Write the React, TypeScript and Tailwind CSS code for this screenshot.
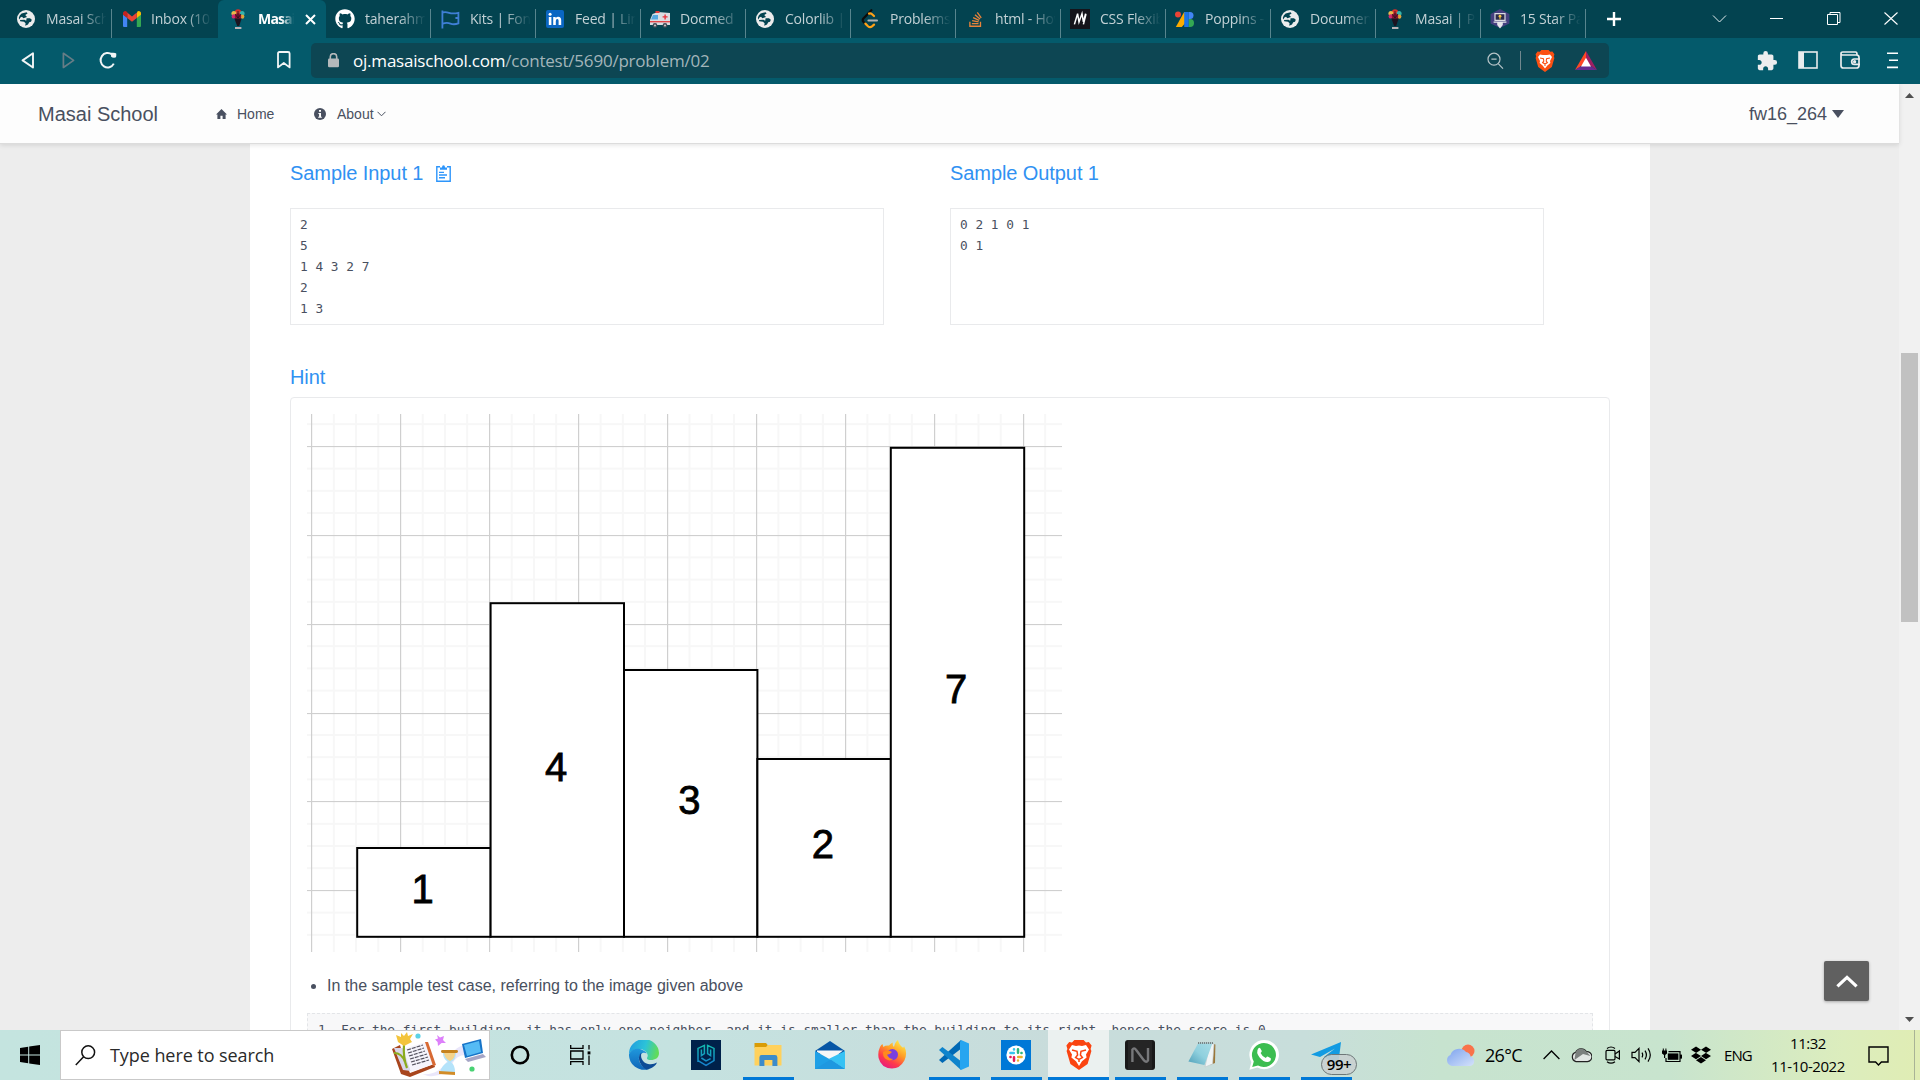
import React from "react";
import { FaGithub, FaStackOverflow, FaDropbox } from "react-icons/fa";
import { MdExtension } from "react-icons/md";

const ui = "font-['Open_Sans','Noto_Sans',sans-serif]";

/* ---------- Favicons ---------- */

const Globe = () => (
  <svg width="18" height="18" viewBox="0 0 18 18">
    <circle cx="9" cy="9" r="9" fill="#ececec" />
    <path d="M4.6 3.4 L9.6 2.2 L10.6 3.6 L8.2 5 L10 7 L6.4 8.2 L5 6.8 L3.4 7.6 L2.4 9.6 L1.8 8 Q2.2 5 4.6 3.4Z M9.6 8.2 H13 L14.8 9.8 L14 11.8 L12.2 12.2 L11 14.4 L8.2 15.8 L8.6 13.2 L7 11.8 L3.2 11.2 L3 10 L7.4 9.8 L9.2 10.8Z" fill="#034350" />
  </svg>
);
const Gmail = () => (
  <svg width="18" height="16" viewBox="0 0 18 16">
    <path d="M0 3.4 V15 Q0 16 1 16 H4.2 V6.6Z" fill="#4285f4" />
    <path d="M18 3.4 V15 Q18 16 17 16 H13.8 V6.6Z" fill="#34a853" />
    <path d="M13.8 2.4 V7 L18 3.8 V2.4 C18 .4 15.8 -.6 14.4 .6Z" fill="#fbbc04" />
    <path d="M4.2 7 V1.6 L9 5.4 L13.8 1.6 V7 L9 10.8Z" fill="#ea4335" />
    <path d="M0 2.4 V3.8 L4.2 7 V1.5 L3.6 .6 C2.2 -.6 0 .4 0 2.4Z" fill="#c5221f" />
  </svg>
);
const Balloons = () => (
  <svg width="16" height="20" viewBox="0 0 16 20">
    <circle cx="8" cy="3.4" r="3.2" fill="#d8322c" />
    <circle cx="3.9" cy="4.4" r="2.5" fill="#e9b84a" />
    <circle cx="12.1" cy="4.4" r="2.5" fill="#35b3ad" />
    <circle cx="3.8" cy="7.4" r="2.2" fill="#d22a72" />
    <circle cx="12.2" cy="7.6" r="2.2" fill="#e0a23a" />
    <circle cx="8" cy="7.4" r="3.2" fill="#8f1330" />
    <path d="M4.4 9.4 L11.6 9.4 L9.2 17 H7.2Z" fill="#1d1420" />
    <path d="M8 2 V9 M5 5 L8 9 L11 5" stroke="#221322" strokeWidth=".8" fill="none" />
    <rect x="5" y="18" width="6.4" height="2" fill="#b9b3b6" />
  </svg>
);
const Flag = () => (
  <svg width="19" height="19" viewBox="0 0 19 19" fill="none" stroke="#3f7fd6" strokeWidth="2">
    <path d="M1.4 0.5 V18.5 M1.4 2.6 Q4 1.6 8 2.8 T17.4 2.8 V13.4 Q13 15 9.4 13.6 T1.4 13.8 M17.4 8 L14.4 8" strokeWidth="1.8" />
  </svg>
);
const LinkedIn = () => (
  <svg width="18" height="18" viewBox="0 0 18 18">
    <rect width="18" height="18" rx="2" fill="#0a66c2" />
    <path d="M2.8 7 H5.4 V15 H2.8Z M7.2 7 H9.7 V8.2 Q10.5 6.8 12.2 6.8 Q15.2 6.8 15.2 10.3 V15 H12.6 V10.8 Q12.6 9 11.3 9 Q9.8 9 9.8 10.9 V15 H7.2Z" fill="#fff" />
    <circle cx="4.1" cy="4.3" r="1.5" fill="#fff" />
  </svg>
);
const Ambulance = () => (
  <svg width="20" height="17" viewBox="0 0 20 17">
    <path d="M2.5 3 L8 1 L20 2 V14 H0 V9Z" fill="#d9dde2" />
    <rect x="5.5" y="0" width="4" height="2" fill="#e23b3b" />
    <path d="M3 4 H8 V8.4 H1Z" fill="#55a9e0" />
    <path d="M0 10 H20 V11.4 H0Z" fill="#e2464a" />
    <path d="M14.4 3.4 H15.8 V5.2 H17.6 V6.6 H15.8 V8.4 H14.4 V6.6 H12.6 V5.2 H14.4Z" fill="#e8323c" />
    <circle cx="5" cy="14.4" r="2.4" fill="#414b57" /><circle cx="15" cy="14.4" r="2.4" fill="#414b57" />
    <circle cx="5" cy="14.4" r="1" fill="#ccc" /><circle cx="15" cy="14.4" r="1" fill="#ccc" />
  </svg>
);
const Leet = () => (
  <svg width="18" height="20" viewBox="0 0 18 20" fill="none" strokeLinecap="round">
    <path d="M10.4 1.2 L2.4 9.4 Q1 11.2 2.4 12.8 L4 14.4" stroke="#0c0c0c" strokeWidth="2.2" />
    <path d="M8 4.6 Q9.6 4 10.8 5 L13 7" stroke="#ffa116" strokeWidth="2.2" />
    <path d="M4.4 14.6 L7 17.2 Q9 19 11 17.4 L13 15.6" stroke="#ffa116" strokeWidth="2.2" />
    <path d="M7.4 11.4 H16" stroke="#b3b3b3" strokeWidth="2" />
  </svg>
);
const MSquare = () => (
  <svg width="20" height="20" viewBox="0 0 20 20">
    <rect width="20" height="20" fill="#15141a" />
    <path d="M4.4 15.4 L7.6 4.6 L9 13 L12 4.6 L13.4 13 L15.6 4.6 M13.4 15.4 L16 5" stroke="#fff" strokeWidth="1.5" fill="none" />
  </svg>
);
const Fonts = () => (
  <svg width="20" height="16" viewBox="0 0 20 16">
    <path d="M6.8 16 H.8 L9.2 1 H13V9Z" fill="#fbab00" />
    <rect x="9.2" y="1" width="4.6" height="15" fill="#1a73e8" />
    <circle cx="3" cy="3.6" r="3" fill="#ea4335" />
    <path d="M13.8 1 H15 A3.5 3.5 0 0 1 15 8 H13.8Z" fill="#4285f4" />
    <path d="M13.8 8 H15 A4 4 0 0 1 15 16 H13.8Z" fill="#34a853" />
  </svg>
);
const StarLaptop = () => (
  <svg width="20" height="20" viewBox="0 0 20 20">
    <path d="M10 0 L19.4 5 V14.4 L10 19 L.6 14.4 V5Z" fill="#454080" />
    <path d="M5 4.6 H15 V11.4 H5Z" fill="#2b2b4c" stroke="#dcdce4" strokeWidth="1.2" />
    <path d="M3.6 12.4 H16.4 V13.8 H12.8 V16 L10 19.4 L7.2 16 V13.8 H3.6Z" fill="#e6e6ea" />
    <circle cx="10" cy="7.2" r="1.4" fill="#f5c542" /><rect x="9.5" y="7.8" width="1" height="2.6" fill="#f5c542" />
  </svg>
);

type TabData = { label: string; icon: React.ReactNode };
const tabs: TabData[] = [
  { label: "taherahmed", icon: <FaGithub size={20} color="#fff" /> },
  { label: "Kits | Font A", icon: <Flag /> },
  { label: "Feed | Linked", icon: <LinkedIn /> },
  { label: "Docmed", icon: <Ambulance /> },
  { label: "Colorlib | W", icon: <Globe /> },
  { label: "Problems - L", icon: <Leet /> },
  { label: "html - How", icon: <FaStackOverflow size={17} color="#e8833a" /> },
  { label: "CSS Flexible", icon: <MSquare /> },
  { label: "Poppins - G", icon: <Fonts /> },
  { label: "Document", icon: <Globe /> },
  { label: "Masai | Pro", icon: <Balloons /> },
  { label: "15 Star Pat", icon: <StarLaptop /> },
];

const TabLabel = ({ children }: { children: React.ReactNode }) => (
  <span className="flex-1 overflow-hidden whitespace-nowrap text-[14px] leading-5 tracking-[-0.2px] text-[#c3d1d5] [mask-image:linear-gradient(to_right,black_55%,transparent_98%)]">
    {children}
  </span>
);

const Tab = ({ label, icon }: TabData) => (
  <div className="mt-[9px] flex h-[29px] w-[105px] shrink-0 border-r border-[#58858e] pr-[3px]">
    <div className="flex h-5 min-w-0 flex-1 items-center">
      <span className="flex w-[39px] shrink-0 justify-center pr-[1px]">{icon}</span>
      <TabLabel>{label}</TabLabel>
    </div>
  </div>
);

const TabStrip = () => (
  <div className={`flex h-[38px] bg-[#034350] ${ui}`}>
    <div className="ml-[7px] flex">
      <Tab label="Masai School" icon={<Globe />} />
      <div className="mt-[9px] flex h-[29px] w-[106px] pr-[5px]">
        <div className="flex h-5 min-w-0 flex-1 items-center">
          <span className="flex w-[39px] shrink-0 justify-center"><Gmail /></span>
          <TabLabel>Inbox (102)</TabLabel>
        </div>
      </div>
      <div className="flex h-[38px] w-[108px] items-center rounded-t-[6px] bg-[#045a6b]">
        <span className="flex w-[40px] shrink-0 justify-center"><Balloons /></span>
        <span className="w-[36px] overflow-hidden whitespace-nowrap text-[14px] font-bold leading-5 tracking-[-0.8px] text-white [mask-image:linear-gradient(to_right,black_65%,transparent)]">Masai |</span>
        <svg className="ml-[11px]" width="11" height="11" viewBox="0 0 11 11" stroke="#fff" strokeWidth="2"><path d="M1 1 L10 10 M10 1 L1 10" /></svg>
      </div>
      {tabs.map((t) => <Tab key={t.label} {...t} />)}
    </div>
    <svg className="ml-[20px] mt-[11px]" width="16" height="16" viewBox="0 0 16 16" stroke="#fff" strokeWidth="2.4"><path d="M8 1 V15 M1 8 H15" /></svg>
    <svg className="ml-[90px] mt-[14px]" width="15" height="10" viewBox="0 0 15 10" fill="none" stroke="#e6eef0" strokeWidth="1"><path d="M1 1.5 L7.5 8 L14 1.5" /></svg>
    <svg className="ml-[43px] mt-[18px]" width="13" height="2" viewBox="0 0 13 2"><rect y="0" width="13" height="1" fill="#fff" /></svg>
    <svg className="ml-[44px] mt-[12px]" width="14" height="13" viewBox="0 0 14 13" fill="none" stroke="#fff"><path d="M.5 2.5 H10.5 V12.5 H.5Z M3 2.5 V.5 H13 V10.5 H10.5" /></svg>
    <svg className="ml-[43px] mt-[12px]" width="14" height="13" viewBox="0 0 14 13" stroke="#fff" strokeWidth="1.1"><path d="M.5 .5 L13.5 12.5 M13.5 .5 L.5 12.5" /></svg>
  </div>
);

const Toolbar = () => (
  <div className={`flex h-[46px] items-start bg-[#045a6b] ${ui}`}>
    <svg className="ml-[21px] mt-[14px]" width="14" height="17" viewBox="0 0 14 17" fill="none" stroke="#f2f5f6" strokeWidth="1.9" strokeLinejoin="round"><path d="M12 1.3 V15.5 L1.6 8.4Z" /></svg>
    <svg className="ml-[27px] mt-[14px]" width="14" height="17" viewBox="0 0 14 17" fill="none" stroke="#667d86" strokeWidth="1.7" strokeLinejoin="round"><path d="M1.4 1.3 V15.5 L11.6 8.4Z" /></svg>
    <svg className="ml-[23px] mt-[13px]" width="19" height="19" viewBox="0 0 19 19" fill="none" stroke="#f2f5f6" strokeWidth="2"><path d="M14.8 12.6 A7 7.2 0 1 1 13 3.6" /><path d="M12 1.8 Q16.5 1.4 17.2 2.4 Q17.6 6 16.4 6.6 Q13.4 7.2 12 5.4Z" fill="#f2f5f6" stroke="none" /></svg>
    <svg className="ml-[159px] mt-[13px]" width="14" height="18" viewBox="0 0 14 18" fill="none" stroke="#f2f5f6" strokeWidth="1.8" strokeLinejoin="round"><path d="M1 2.4 Q1 1 2.4 1 H11 Q12.6 1 12.6 2.4 V16.4 L6.8 12 L1 16.4Z" /></svg>
    <div className="ml-[20px] mt-[5px] flex h-[35px] w-[1298px] items-center rounded-[5px] bg-[#0d4653]">
      <svg className="ml-[17px]" width="11" height="15" viewBox="0 0 11 15"><rect y="5.5" width="11" height="8.7" rx="1.2" fill="#b5b9bb" /><path d="M2.3 6 V3.8 A3.2 3.2 0 0 1 8.7 3.8 V6" fill="none" stroke="#b5b9bb" strokeWidth="1.6" /></svg>
      <span className="ml-[14px] w-[400px] whitespace-nowrap text-[17px] tracking-[-0.21px] text-[#a3b5ba]"><span className="text-white">oj.masaischool.com</span>/contest/5690/problem/02</span>
      <svg className="ml-auto" width="17" height="18" viewBox="0 0 17 18" fill="none" stroke="#b6c4c8" strokeWidth="1.2"><circle cx="7" cy="7.2" r="6" /><path d="M11.2 11.6 L16 16.6 M4.4 7.2 H9.6" /></svg>
      <span className="ml-[16px] h-[19px] w-px bg-[#71888f]" />
      <svg className="ml-[14px]" width="20" height="22" viewBox="0 0 20 22">
        <path d="M4.8 1.8 L6.4 0 H13.6 L15.2 1.8 L17.4 1.6 L19.4 4.2 L18.8 6.4 L19.4 8 L16.8 17 L10 22 L3.2 17 L.6 8 L1.2 6.4 L.6 4.2 L2.6 1.6Z" fill="#fb5012" />
        <path d="M5 4.4 L8 5 H12 L15 4.4 L17 7 L15 11 L15.4 13 L12.4 15.4 L10 18.4 L7.6 15.4 L4.6 13 L5 11 L3 7Z" fill="#fff" />
        <path d="M5 8 L8.4 8.8 L8.8 11 L7.6 12.6 L10 14 L12.4 12.6 L11.2 11 L11.6 8.8 L15 8 M10 14 V16" stroke="#fb5012" strokeWidth="1.1" fill="none" />
      </svg>
      <svg className="ml-[20px] mr-[12px]" width="22" height="19" viewBox="0 0 22 19"><path d="M11 0 L0 19 L11 12Z" fill="#ff4724" /><path d="M11 0 L22 19 L11 12Z" fill="#9e1f63" /><path d="M0 19 H22 L11 12Z" fill="#662d91" /><path d="M11 6.8 L6 15.4 H16Z" fill="#fff" /></svg>
    </div>
    <MdExtension className="ml-[147px] mt-[12px]" size={22} color="#ededee" />
    <svg className="ml-[20px] mt-[13px]" width="20" height="18" viewBox="0 0 20 18"><rect x="1" y="1" width="18" height="16" fill="none" stroke="#e9eced" strokeWidth="1.6" /><rect x="1" y="1" width="5" height="16" fill="#e9eced" /></svg>
    <svg className="ml-[22px] mt-[13px]" width="21" height="18" viewBox="0 0 21 18" fill="none" stroke="#e9eced" strokeWidth="1.7"><path d="M1 2.6 Q1 1 2.8 1 H15.6 Q17 1 17 3.6 M1 2.6 V14.4 Q1 17 3.4 17 H16.4 Q19 17 19 14.4 V6.4 Q19 4 16.4 4 H2.4 Q1 4 1 2.6 M20 8 H14.4 A2.6 2.6 0 0 0 14.4 13.4 H20" /><circle cx="14.6" cy="10.7" r=".8" /></svg>
    <svg className="ml-[26px] mt-[14px]" width="12" height="17" viewBox="0 0 12 17" stroke="#fff" strokeWidth="1.6"><path d="M0 1.2 H11 M2 8.2 H11 M0 15.4 H11" /></svg>
  </div>
);

const NavBar = () => (
  <div className="z-10 flex h-[60px] w-[1899px] items-center border-b border-[#dcdcdc] bg-[#fdfdfd] text-[#495060] shadow-[0_1px_5px_rgba(0,0,0,0.12)]">
    <span className="ml-[38px] w-[178px] text-[20px]">Masai School</span>
    <svg width="11" height="10" viewBox="0 0 11 10" fill="#495060"><path d="M5.5 0 L11 5.4 H9.6 V10 H6.6 V6.8 H4.4 V10 H1.4 V5.4 H0Z" /></svg>
    <span className="ml-[10px] w-[77px] pt-[2px] text-[14px]">Home</span>
    <svg width="12" height="12" viewBox="0 0 12 12"><circle cx="6" cy="6" r="6" fill="#495060" /><path d="M5 2 H7 V3.8 H5Z M4.4 5 H7 V8.8 H7.8 V9.8 H4.2 V8.8 H5.1 V6 H4.4Z" fill="#fff" /></svg>
    <span className="ml-[11px] pt-[2px] text-[14px]">About</span>
    <svg className="ml-[3px]" width="9" height="6" viewBox="0 0 9 6" fill="none" stroke="#495060" strokeWidth="1"><path d="M.5 .8 L4.5 4.8 L8.5 .8" /></svg>
    <span className="ml-auto pt-[2px] text-[18px]">fw16_264</span>
    <svg className="ml-[5px] mr-[55px]" width="12" height="8" viewBox="0 0 12 8"><path d="M0 0 H12 L6 8Z" fill="#495060" /></svg>
  </div>
);

const mono = "font-['DejaVu_Sans_Mono','Liberation_Mono',monospace] text-[12.8px] leading-[21px]";

const SampleBox = ({ lines }: { lines: string[] }) => (
  <div className={`h-[117px] w-[594px] whitespace-pre border border-[#e9eaec] px-[9px] py-[5px] text-[#495060] ${mono}`}>
    {lines.map((l, i) => <div key={i}>{l}</div>)}
  </div>
);

/* ---------- Building heights chart ---------- */

const bars = [
  { x: 50.2, y: 434, label: "1", base: 488.5 },
  { x: 183.6, y: 189.2, label: "4", base: 367 },
  { x: 317, y: 256, label: "3", base: 399.5 },
  { x: 450.4, y: 345, label: "2", base: 444 },
  { x: 583.8, y: 33.8, label: "7", base: 288.6 },
];

const Chart = () => (
  <svg className="block" width="755" height="538" viewBox="0 0 755 538">
    {Array.from({ length: 34 }, (_, i) => i).filter((i) => i % 4 !== 0).map((i) => (
      <rect key={i} x={3.6 + i * 22.23} y="0" width="2" height="538" fill="#f7f7f7" />
    ))}
    {Array.from({ length: 24 }, (_, i) => i).filter((i) => i % 4 !== 1).map((i) => (
      <rect key={i} x="0" y={9.2 + i * 22.2} width="755" height="2" fill="#f7f7f7" />
    ))}
    {Array.from({ length: 9 }, (_, i) => (
      <rect key={i} x={Math.round(4.3 + i * 88.96)} y="0" width="1.2" height="538" fill="#cfcfcf" />
    ))}
    {Array.from({ length: 6 }, (_, i) => (
      <rect key={i} x="0" y={Math.round(32 + i * 88.85)} width="755" height="1.1" fill="#cfcfcf" />
    ))}
    {bars.map((b) => (
      <g key={b.label}>
        <rect x={b.x} y={b.y} width="133.4" height={522.8 - b.y} fill="#fff" stroke="#000" strokeWidth="2" />
        <text x={b.x + 65.4} y={b.base} fontSize="40" textAnchor="middle" fill="#000" stroke="#000" strokeWidth=".8" fontFamily="Liberation Sans, Arial, sans-serif">{b.label}</text>
      </g>
    ))}
  </svg>
);

const Content = () => (
  <div className="ml-[250px] h-[886px] w-[1400px] overflow-hidden bg-white pl-[40px] text-[#495060]">
    <div className="flex gap-[66px] pt-[14px]">
      <div>
        <div className="flex h-[30px] items-center text-[20px] tracking-[-0.08px] text-[#3091f2]">
          Sample Input 1
          <svg className="ml-[13px]" width="15" height="17" viewBox="0 0 15 17" fill="none" stroke="#2d95fb" strokeWidth="1.4"><path d="M4 1.8 H.8 V16.2 H14.2 V1.8 H11 M3 7.4 H8 M3 10 H11 M3 12.8 H9" /><path d="M4 4.8 V2.6 H6 Q6 .2 7.5 .2 Q9 .2 9 2.6 H11 V4.8Z" fill="#2d95fb" stroke="none" /></svg>
        </div>
        <div className="mt-[20px]"><SampleBox lines={["2", "5", "1 4 3 2 7", "2", "1 3"]} /></div>
      </div>
      <div>
        <div className="flex h-[30px] items-center text-[20px] tracking-[-0.08px] text-[#3091f2]">Sample Output 1</div>
        <div className="mt-[20px]"><SampleBox lines={["0 2 1 0 1", "0 1"]} /></div>
      </div>
    </div>
    <div className="mt-[37px] h-[30px] text-[20px] leading-[30px] tracking-[-0.08px] text-[#3091f2]">Hint</div>
    <div className="mt-[5px] h-[800px] w-[1320px] rounded-[4px] border border-[#e9eaec] px-[16px] pt-[16px]">
      <Chart />
      <div className="mt-[22px] flex h-[24px] items-center text-[16px]">
        <span className="ml-[4px] mr-[11px] h-[5px] w-[5px] rounded-full bg-[#495060]" />
        In the sample test case, referring to the image given above
      </div>
      <div className={`mt-[15px] h-[60px] whitespace-pre border border-dashed border-[#e3e5e8] bg-[#f8f8f9] px-[10px] pt-[5px] ${mono}`}>
        1. For the first building, it has only one neighbor, and it is smaller than the building to its right, hence the score is 0
      </div>
    </div>
  </div>
);

const Page = () => (
  <div className="relative flex h-[946px] overflow-hidden bg-[#ededed] font-['Liberation_Sans',Arial,sans-serif]">
    <div className="flex w-[1899px] flex-col">
      <NavBar />
      <Content />
    </div>
    <div className="flex w-[21px] flex-col items-center bg-[#f1f1f1]">
      <svg className="mt-[9px]" width="9" height="5" viewBox="0 0 9 5"><path d="M4.5 0 L9 5 H0Z" fill="#505050" /></svg>
      <div className="mt-[255px] h-[269px] w-[17px] bg-[#c1c1c1]" />
      <svg className="mb-[8px] mt-auto" width="9" height="5" viewBox="0 0 9 5"><path d="M4.5 5 L9 0 H0Z" fill="#505050" /></svg>
    </div>
    <div className="absolute left-[1824px] top-[877px] flex h-[40px] w-[45px] items-center justify-center rounded-[2px] bg-[#606060] shadow-[0_1px_3px_rgba(0,0,0,0.3)]">
      <svg width="22" height="13" viewBox="0 0 22 13" fill="none" stroke="#fff" strokeWidth="3.2"><path d="M1.4 11.4 L11 2.4 L20.6 11.4" /></svg>
    </div>
  </div>
);

/* ---------- Taskbar icons ---------- */

const SearchArt = () => (
  <svg width="94" height="46" viewBox="0 0 94 46">
    <path d="M30 42 Q46 44 56 28 Q66 8 84 14 L80 24 Q66 20 60 32 Q52 46 36 44Z" fill="#e9e6fa" />
    <path d="M0 17 L8 13 L13 30 L18 41 L42 32 L43 35 L18 45 L9 42Z" fill="#a8451d" />
    <path d="M2 16 L13 16 L19 39 L11 38Z" fill="#d9d6ea" />
    <path d="M11 17 L34 10 L42 32 L19 40Z" fill="#f5f4fb" />
    <path d="M33 10 L36 10 L44 33 L41 34Z" fill="#d86a34" />
    <path d="M15 18 L31 13 M16 21 L32 16 M17 24 L33 19 M18 27 L35 22 M19 30 L36 25 M20 33 L37 28" stroke="#55535f" strokeWidth="1.2" strokeDasharray="4 1" />
    <path d="M12 12 Q11 26 15 36 M2 21 Q10 21 13 30" stroke="#8bab1e" strokeWidth="2.2" fill="none" />
    <path d="M4 3 L9 5 L9 1 L12 4 L15 0 L16 4 L21 2 L18 7 L20 10 L12 14 L6 10Z" fill="#f3c43c" />
    <circle cx="26" cy="4" r="2.6" fill="#5cd2e6" />
    <path d="M45 3 L48 5.4 L52 4 L51 8 L54 11 L49.6 11 L46 14 L45.6 10 L43 7.6 L46 6.6Z" fill="#dd80fa" />
    <rect x="49" y="18" width="17" height="3" rx="1.4" fill="#c68420" />
    <path d="M51 21 H64 Q64 28 59 30 Q63 33 63 40 H48 Q50 33 56 30 Q51 27 51 21Z" fill="#b4e3fa" />
    <path d="M52 21 H63 Q63 27 58 29 Q53 27 52 21Z" fill="#f5d48c" />
    <path d="M47 39 L63 40 L63 43 L47 42Z" fill="#d28c28" />
    <path d="M70 12 L89 7 L91 21 L73 26Z" fill="#1673c8" />
    <path d="M72 13 L87 9 L89 20 L75 24Z" fill="#55bbf5" />
    <path d="M73 27 L91 22 L94 25 L76 30Z" fill="#a5a5c6" />
    <circle cx="80" cy="37" r="2.6" fill="#49d273" />
  </svg>
);

const Edge = () => (
  <svg width="30" height="30" viewBox="0 0 30 30">
    <defs>
      <linearGradient id="e1" x1="0" y1="0.2" x2="1" y2="0.4"><stop offset="0" stopColor="#1f9de0" /><stop offset=".55" stopColor="#2cc3d8" /><stop offset="1" stopColor="#62dc58" /></linearGradient>
      <linearGradient id="e2" x1="0" y1="0" x2="0" y2="1"><stop offset="0" stopColor="#1f97dc" /><stop offset="1" stopColor="#0f65b8" /></linearGradient>
    </defs>
    <path d="M0 14 A15 14.4 0 0 1 30 13 C30 18 26 20 22 20 C18 20 17.4 18.6 18.4 17 C20 14 16 9 10 9 C5 9 1.4 11.4 0 14Z" fill="url(#e1)" />
    <path d="M0 14 C2 9.6 7 8 11 9 C14.6 10 17 12 17.6 13.4 C13 11 8 16 10.6 22 C12.6 27 18 29 20 29 A15 15 0 0 1 0 14Z" fill="url(#e2)" />
    <path d="M12.6 12.6 C8.4 15 8.6 24.4 17.4 29.6 C23 29 27 25.4 28 22.6 Q24 25 19 24 C13 22.6 11 17 12.6 12.6Z" fill="#0d4b96" />
  </svg>
);
const PG = () => (
  <svg width="30" height="30" viewBox="0 0 30 30">
    <defs><linearGradient id="pg" x1="0" y1="0" x2="0" y2="1"><stop offset="0" stopColor="#13b9b0" /><stop offset="1" stopColor="#1680cf" /></linearGradient></defs>
    <rect width="30" height="30" fill="#00214a" />
    <path d="M7 22 V8.4 L13.4 5.4 V13.6 L10.4 15.6 V9.4 M7 17 V20.6 L15 25.4 L23 20.6 V8.4 L16.6 5.4 V13.6 L19.6 15.6 V9.4 M10.4 18 L15 21 L19.6 18.6" fill="none" stroke="url(#pg)" strokeWidth="1.5" />
  </svg>
);
const Explorer = () => (
  <svg width="30" height="30" viewBox="0 0 30 30">
    <path d="M1.5 3 H13 L14.6 5 V8 H1.5Z" fill="#d99c06" />
    <path d="M1.5 7 H13 L15 5 H28.5 V25.5 H1.5Z" fill="#ffd15c" />
    <path d="M6.4 26 V17.4 Q6.4 15 8.6 15 H22 Q24.4 15 24.4 17.4 V26 H19.4 V20 H11.4 V26Z" fill="#3c8ccb" />
  </svg>
);
const Mail = () => (
  <svg width="30" height="30" viewBox="0 0 30 30">
    <path d="M0 11 L15 1 L30 11 L27 14 H3Z" fill="#0756a5" />
    <path d="M2 10.4 H28 L16 20 L2 12Z" fill="#f7f7f7" />
    <path d="M0 11 L16 20 L30 29 H0Z" fill="#1fa0e6" />
    <path d="M30 11 V29 L14 18.8Z" fill="#36c2f4" />
    <path d="M0 29 L15.6 19.6 L30 29Z" fill="#1e98e0" />
  </svg>
);
const Firefox = () => (
  <svg width="30" height="30" viewBox="0 0 30 30">
    <defs><linearGradient id="ff" x1=".8" y1="0" x2=".2" y2="1"><stop offset="0" stopColor="#fff04a" /><stop offset=".4" stopColor="#ff9a25" /><stop offset=".7" stopColor="#ff3b4a" /><stop offset="1" stopColor="#e31587" /></linearGradient></defs>
    <path d="M3 7 Q4 5 5.4 4 L6.4 7 Q8 5.4 12 5.6 Q14 3 16 2.6 Q15 5 17 7 Q18 2 21 0 Q22 5 25.6 7.4 Q27 8 27 6 Q31 13 27.4 20.6 Q23 28.6 15 28.6 Q4 28 1.6 18 Q.6 12 3 7Z" fill="url(#ff)" />
    <circle cx="15.4" cy="14.6" r="5.6" fill="#7a3fe0" />
    <path d="M6 12 Q11 9 15 12 Q13 14.6 10 14.8 Q12 19 16.4 19 Q12 22 8 18.6 Q5.6 16 6 12Z" fill="#ff8a1e" />
  </svg>
);
const VSCode = () => (
  <svg width="30" height="30" viewBox="0 0 30 30">
    <path d="M0 20 L22 0 L23 8 L3.4 23Z" fill="#0069b5" />
    <path d="M0 10 L3.4 7 L23 22 L22 30Z" fill="#0f84cc" />
    <path d="M22 0 L30 3.6 V26.4 L22 30 L21 28 V2Z" fill="#27a5f0" />
  </svg>
);
const Slack = () => (
  <svg width="30" height="30" viewBox="0 0 30 30" strokeLinecap="round" strokeWidth="2.5" fill="none">
    <rect width="30" height="30" fill="#0078d7" /><circle cx="15" cy="15" r="9.6" fill="#fff" />
    <path d="M13 9.2 V9.4 M9.4 13 H12.8" stroke="#36c5f0" /><path d="M17 9.2 V12.8 M20.6 13 H20.4" stroke="#2eb67d" />
    <path d="M17.2 17 H20.6 M17 20.6 V20.4" stroke="#ecb22e" /><path d="M9.4 17 H9.6 M13 17.2 V20.8" stroke="#e01e5a" />
  </svg>
);
const Brave = () => (
  <span className="flex h-[30px] w-[30px] items-center justify-center">
    <svg width="26" height="30" viewBox="0 0 26 30">
      <path d="M6 2.4 L8.4 0 H17.6 L20 2.4 L22.8 2 L25.6 5.6 L24.6 9 L25.4 11 L21.6 24 L13 30 L4.4 24 L.6 11 L1.4 9 L.4 5.6 L3.2 2Z" fill="#fa4411" />
      <path d="M6 5 L10 6 L13 5.4 L16 6 L20 5 L23 9.4 L20 14.6 L20.6 17.6 L16 21.2 L13 26 L10 21.2 L5.4 17.6 L6 14.6 L3 9.4Z" fill="#fff" />
      <path d="M6 10 L11 11.4 L11.6 15 L9.6 17.6 L13 19.4 L16.4 17.6 L14.4 15 L15 11.4 L20 10 M13 19.4 V22" fill="none" stroke="#fa4411" strokeWidth="1.5" />
    </svg>
  </span>
);
const NIcon = () => (
  <svg width="30" height="30" viewBox="0 0 30 30">
    <rect width="30" height="30" rx="3" fill="#191919" /><rect x="3" y="0" width="24" height="30" fill="#252525" />
    <path d="M7.4 22 V9.6 Q9 7 11 9.8 L19 20.4 Q21.4 23 23 20.4 V8" fill="none" stroke="#77787a" strokeWidth="2.4" />
  </svg>
);
const Notepad = () => (
  <svg width="30" height="30" viewBox="0 0 30 30">
    <defs><linearGradient id="np" x1="0" y1="1" x2="1" y2="0"><stop offset="0" stopColor="#4f9fb8" /><stop offset=".5" stopColor="#8fd0de" /><stop offset="1" stopColor="#a9dde6" /></linearGradient></defs>
    <path d="M25 3.4 L28.4 4.4 L28 23 L23 25Z" fill="#9b7638" />
    <path d="M23 3.4 L27 4 L25.6 24 L18 27Z" fill="#f0f4f5" stroke="#c0c8ca" strokeWidth=".6" />
    <path d="M11 3.4 L25.4 3.4 L17.4 25 L1.4 21.6Z" fill="url(#np)" />
    <path d="M11 3 H26" stroke="#626b6d" strokeWidth="1.6" strokeDasharray="1.2 .8" />
  </svg>
);
const WhatsApp = () => (
  <svg width="30" height="30" viewBox="0 0 30 30">
    <path d="M.4 29.8 L2.4 22 A14.8 14.6 0 1 1 8.4 27.6Z" fill="#fff" />
    <path d="M3.2 27 L4.8 21.4 A12 12 0 1 1 9 25.4Z" fill="#3cbd50" />
    <path d="M9.4 8.2 Q10.6 7.4 11.4 8.4 L12.8 11 Q12.8 12 11.6 13 Q13 16.4 16.8 18 Q18 16.6 18.6 16.6 L21.8 18.2 Q22.4 21.4 19 22 Q15 22.6 10.8 17.8 Q6.4 12 9.4 8.2Z" fill="#fff" />
  </svg>
);
const Telegram = () => (
  <span className="relative block h-[30px] w-[30px]">
    <svg width="30" height="30" viewBox="0 0 30 30"><path d="M0 14.6 L30 2 L27 26 L13 17 L24 8.4 L9 17Z" fill="#129be2" /></svg>
    <span className="absolute left-[10px] top-[14px] flex h-[21px] w-[36px] items-center justify-center rounded-full border border-[#6e7778] bg-[#c9d0d0]/90 text-[15px] font-semibold tracking-[-0.4px] text-black">99+</span>
  </span>
);

type App = { icon: React.ReactNode; open?: boolean; active?: boolean };
const apps: App[] = [
  { icon: <Edge /> }, { icon: <PG /> }, { icon: <Explorer />, open: true }, { icon: <Mail /> }, { icon: <Firefox /> },
  { icon: <VSCode />, open: true }, { icon: <Slack />, open: true }, { icon: <Brave />, open: true, active: true },
  { icon: <NIcon />, open: true }, { icon: <Notepad />, open: true }, { icon: <WhatsApp />, open: true }, { icon: <Telegram />, open: true },
];

const AppButton = ({ icon, open, active }: App) => (
  <div className={active ? "ml-px flex h-[50px] w-[61px] flex-col items-center bg-[#ebf1f0] pt-[10px]" : "flex h-[50px] w-[62px] flex-col items-center pt-[10px]"}>
    {icon}
    {open && <span className={active ? "mt-auto h-[3px] w-[61px] bg-[#0078d7]" : "mt-auto h-[3px] w-[51px] bg-[#0078d7]"} />}
  </div>
);

const Tray = () => (
  <div className="ml-auto flex h-full items-center text-black">
    <svg width="31" height="28" viewBox="0 0 31 28">
      <defs><linearGradient id="wc" x1="0" y1="0" x2="1" y2="1"><stop offset="0" stopColor="#7ea4ee" /><stop offset="1" stopColor="#d4e2fa" /></linearGradient></defs>
      <circle cx="23" cy="10" r="6.5" fill="#f9734a" />
      <path d="M7 25 A5.8 5.8 0 0 1 5.4 14 A9 8.6 0 0 1 21 11 A5.6 5.6 0 0 1 25.6 15.6 A4.8 4.8 0 0 1 25 25Z" fill="url(#wc)" />
    </svg>
    <span className="ml-[9px] w-[58px] text-[18px] tracking-[-0.7px]">26°C</span>
    <svg width="17" height="10" viewBox="0 0 17 10" fill="none" stroke="#000" strokeWidth="1.3"><path d="M.6 9 L8.5 1 L16.4 9" /></svg>
    <svg className="ml-[11px]" width="21" height="16" viewBox="0 0 21 16"><path d="M5 14.6 A4.8 4.8 0 0 1 4.6 5.4 A6.2 6.2 0 0 1 15.4 4.6 A5 5 0 0 1 16.4 14.6Z" fill="#e2e6e4" stroke="#222" strokeWidth="1.2" /><path d="M4.6 5.4 A6.2 6.2 0 0 1 15.4 4.6 L19.4 9 L12 7 L3.4 13Z" fill="#7b807e" /></svg>
    <svg className="ml-[13px]" width="16" height="18" viewBox="0 0 16 18" fill="none" stroke="#000" strokeWidth="1.2"><rect x="1" y="4.4" width="9" height="9.4" rx="1" /><path d="M10 8 L14.4 5 V13 L10 10.4 M2 2.4 Q6 -.4 10 2.4 M2 15.8 Q6 18.6 10 15.8" /></svg>
    <svg className="ml-[10px]" width="22" height="16" viewBox="0 0 22 16" fill="none" stroke="#000" strokeWidth="1.2"><path d="M1 5.4 H4 L8 1.4 V14.6 L4 10.6 H1Z M11 5.6 Q12.4 8 11 10.4 M14 3.6 Q16.8 8 14 12.4 M17 1.4 Q21.6 8 17 14.6" /></svg>
    <svg className="ml-[9px]" width="20" height="15" viewBox="0 0 20 15"><path d="M6.5 3.6 H18 V13.5 H4 V10" fill="none" stroke="#000" strokeWidth="1.2" /><rect x="5.8" y="5.4" width="10.6" height="6.4" /><rect x="18" y="6.6" width="2" height="4" /><path d="M0 2.6 H5 V5.4 L3.2 7 V10 H2 V7 L0 5.4Z M.8 .4 H1.8 V3 H.8Z M3.4 .4 H4.4 V3 H3.4Z" /></svg>
    <FaDropbox className="ml-[9px]" size={20} />
    <span className="ml-[13px] w-[41px] text-[15px] tracking-[-0.9px]">ENG</span>
    <span className="flex w-[86px] flex-col items-center text-[15px] leading-[23px] tracking-[-0.45px]"><span>11:32</span><span>11-10-2022</span></span>
    <svg className="ml-[17px] mt-px" width="21" height="20" viewBox="0 0 21 20" fill="none" stroke="#000" strokeWidth="1.4"><path d="M1 1 H20 V16 H13.4 L10.5 19 L7.6 16 H1Z" /></svg>
    <span className="ml-[25px] mr-[5px] h-full w-px bg-[#a9b396]" />
  </div>
);

const Taskbar = () => (
  <div className={`flex h-[50px] bg-[linear-gradient(90deg,#c4e4df_0%,#c5e2e0_36%,#c8dcdb_55%,#c8dedb_68%,#c7e3cf_75%,#c8e4ce_87%,#dcedbd_96%,#e0edb4_100%)] ${ui}`}>
    <div className="flex w-[60px] items-center justify-center">
      <svg width="20" height="20" viewBox="0 0 20 20"><path d="M0 3 L8.2 1.8 V9.5 H0Z M9.2 1.6 L20 0 V9.5 H9.2Z M0 10.5 H8.2 V18.2 L0 17Z M9.2 10.5 H20 V20 L9.2 18.4Z" /></svg>
    </div>
    <div className="flex w-[430px] items-center border border-[#c9c9c9] bg-white">
      <svg className="ml-[14px]" width="21" height="21" viewBox="0 0 21 21" fill="none" stroke="#111" strokeWidth="1.5"><circle cx="13.2" cy="7.2" r="6.4" /><path d="M8.6 11.8 L.8 20" /></svg>
      <span className="ml-[14px] whitespace-nowrap text-[18px] tracking-[-0.07px] text-[#2a2a2a]">Type here to search</span>
      <span className="ml-auto mr-[3px]"><SearchArt /></span>
    </div>
    <div className="flex w-[61px] items-center justify-center pr-[2px]"><svg width="20" height="20" viewBox="0 0 20 20"><circle cx="10" cy="10" r="8.2" fill="none" stroke="#000" strokeWidth="2.6" /></svg></div>
    <div className="flex w-[62px] items-center justify-center pr-[4px]">
      <svg width="21" height="20" viewBox="0 0 21 20" fill="none" stroke="#000" strokeWidth="1.3"><path d="M.7 0 V3.4 H13 V0 M.7 20 V16.6 H13 V20 M.7 6 H13 V14 H.7Z M19 0 V4.6 M19 10.6 V20" /><rect x="17.6" y="6.4" width="2.8" height="3" fill="#000" stroke="none" /></svg>
    </div>
    {apps.map((a, i) => <AppButton key={i} {...a} />)}
    <Tray />
  </div>
);

export default function App() {
  return (
    <div className="h-[1080px] w-[1920px] overflow-hidden">
      <TabStrip />
      <Toolbar />
      <Page />
      <Taskbar />
    </div>
  );
}
